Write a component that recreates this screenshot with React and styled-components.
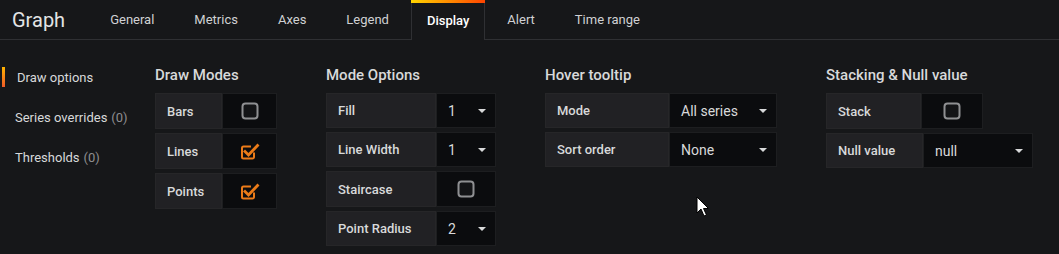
import React from "react";
import styled, { createGlobalStyle, css } from "styled-components";

const GlobalStyle = createGlobalStyle`
  html, body { margin: 0; padding: 0; background: #161719; }
  body { font-family: Roboto, "Helvetica Neue", Arial, sans-serif; color: #d8d9da; }
  * { box-sizing: border-box; }
`;

const Page = styled.div`
  position: relative;
  width: 1059px;
  height: 254px;
  background: #161719;
  overflow: hidden;
`;

const Header = styled.div`
  display: flex;
  align-items: stretch;
  height: 40px;
  border-bottom: 1px solid #2f3033;
`;

const Title = styled.div`
  padding-left: 12px;
  margin-right: 25px;
  font-size: 20px;
  line-height: 40px;
  color: #e3e4e5;
`;

const Tabs = styled.div`
  display: flex;
  align-items: stretch;
`;

const Tab = styled.div`
  position: relative;
  display: flex;
  align-items: center;
  padding: 0 17px 1px;
  margin: 0 2px;
  border: 1px solid transparent;
  border-bottom: none;
  font-size: 13px;
  color: #d0d1d3;
  ${(p) =>
    p.$active &&
    css`
      padding: 0 15px 1px;
      border-color: #2f3033;
      background: #161719;
      margin-bottom: -1px;
      color: #ffffff;
      font-weight: 500;
      &::before {
        content: "";
        position: absolute;
        left: -1px;
        right: -1px;
        top: -1px;
        height: 3px;
        background: linear-gradient(to right, #ffd500, #ff4400);
      }
    `}
`;

const Body = styled.div`
  display: flex;
  padding-top: 17px;
`;

const SideNav = styled.div`
  width: 155px;
  flex-shrink: 0;
  display: flex;
  flex-direction: column;
`;

const NavItem = styled.div`
  position: relative;
  height: 40px;
  display: flex;
  align-items: center;
  padding-left: ${(p) => (p.$active ? 17 : 15)}px;
  font-size: 13px;
  color: #d8d9da;
  ${(p) =>
    p.$active &&
    css`
      &::before {
        content: "";
        position: absolute;
        left: 2px;
        top: 10px;
        width: 3px;
        height: 20px;
        background: linear-gradient(to bottom, #ffb400, #f05a28);
      }
    `}
`;

const Count = styled.span`
  color: #8e8e90;
  margin-left: 4px;
`;

const Sections = styled.div`
  display: flex;
  gap: 49px;
  padding-top: 8px;
`;

const Section = styled.div`
  display: flex;
  flex-direction: column;
`;

const Heading = styled.div`
  font-size: 15px;
  font-weight: 500;
  line-height: 21px;
  margin-bottom: 7px;
  color: #d8d9da;
`;

const Row = styled.div`
  display: flex;
  height: ${(p) => (p.$tall ? 36 : 35)}px;
  margin-bottom: 4px;
`;

const Label = styled.div`
  width: ${(p) => p.$w}px;
  display: flex;
  align-items: center;
  padding-left: 11px;
  background: #212124;
  border: 1px solid #262628;
  font-size: 13px;
  font-weight: 500;
  color: #d8d9da;
`;

const CheckCell = styled.div`
  width: ${(p) => p.$w}px;
  display: flex;
  align-items: center;
  justify-content: center;
  background: #0b0c0e;
  border: 1px solid #1d1e20;
`;

const SelectCell = styled.div`
  width: ${(p) => p.$w}px;
  display: flex;
  align-items: center;
  justify-content: space-between;
  padding: 0 9px 0 11px;
  background: #0b0c0e;
  border: 1px solid #1d1e20;
  font-size: 14px;
  color: #d8d9da;
`;

const Caret = styled.span`
  width: 0;
  height: 0;
  border-left: 4px solid transparent;
  border-right: 4px solid transparent;
  border-top: 4px solid #d8d9da;
`;

const Cursor = styled.svg`
  position: absolute;
  left: 696px;
  top: 196px;
`;

const Checkbox = ({ checked }) =>
  checked ? (
    <svg width="20" height="19" viewBox="0 0 20 19">
      <path
        d="M14 10.5 V15 a1.5 1.5 0 0 1 -1.5 1.5 H3.5 A1.5 1.5 0 0 1 2 15 V6 A1.5 1.5 0 0 1 3.5 4.5 H11"
        fill="none"
        stroke="#eb7b18"
        strokeWidth="2"
      />
      <path d="M5 9.5 L8.5 13 L17.5 3.5" fill="none" stroke="#eb7b18" strokeWidth="2.8" strokeLinecap="square" />
    </svg>
  ) : (
    <svg width="18" height="18" viewBox="0 0 18 18">
      <rect x="1.5" y="1.5" width="15" height="15" rx="3" fill="#131416" stroke="#8f9092" strokeWidth="2" />
    </svg>
  );

const CheckRow = ({ label, lw, cw, checked }) => (
  <Row $tall>
    <Label $w={lw}>{label}</Label>
    <CheckCell $w={cw}>
      <Checkbox checked={checked} />
    </CheckCell>
  </Row>
);

const SelectRow = ({ label, lw, vw, value }) => (
  <Row>
    <Label $w={lw}>{label}</Label>
    <SelectCell $w={vw}>
      <span>{value}</span>
      <Caret />
    </SelectCell>
  </Row>
);

const tabs = ["General", "Metrics", "Axes", "Legend", "Display", "Alert", "Time range"];

export default function App() {
  return (
    <Page>
      <GlobalStyle />
      <Header>
        <Title>Graph</Title>
        <Tabs>
          {tabs.map((t) => (
            <Tab key={t} $active={t === "Display"}>
              {t}
            </Tab>
          ))}
        </Tabs>
      </Header>
      <Body>
        <SideNav>
          <NavItem $active>Draw options</NavItem>
          <NavItem>
            Series overrides<Count>(0)</Count>
          </NavItem>
          <NavItem>
            Thresholds<Count>(0)</Count>
          </NavItem>
        </SideNav>
        <Sections>
          <Section>
            <Heading>Draw Modes</Heading>
            <CheckRow label="Bars" lw={67} cw={55} />
            <CheckRow label="Lines" lw={67} cw={55} checked />
            <CheckRow label="Points" lw={67} cw={55} checked />
          </Section>
          <Section>
            <Heading>Mode Options</Heading>
            <SelectRow label="Fill" lw={110} vw={60} value="1" />
            <SelectRow label="Line Width" lw={110} vw={60} value="1" />
            <CheckRow label="Staircase" lw={110} cw={60} />
            <SelectRow label="Point Radius" lw={110} vw={60} value="2" />
          </Section>
          <Section>
            <Heading>Hover tooltip</Heading>
            <SelectRow label="Mode" lw={124} vw={108} value="All series" />
            <SelectRow label="Sort order" lw={124} vw={108} value="None" />
          </Section>
          <Section>
            <Heading>Stacking &amp; Null value</Heading>
            <CheckRow label="Stack" lw={95} cw={62} />
            <SelectRow label="Null value" lw={97} vw={110} value="null" />
          </Section>
        </Sections>
      </Body>
      <Cursor width="14" height="22" viewBox="0 0 14 22">
        <path d="M1 1 L1 17 L5 13 L8 20 L10.5 19 L7.5 12.5 L12.5 12.5 Z" fill="#ffffff" stroke="#000000" strokeWidth="1" />
      </Cursor>
    </Page>
  );
}
